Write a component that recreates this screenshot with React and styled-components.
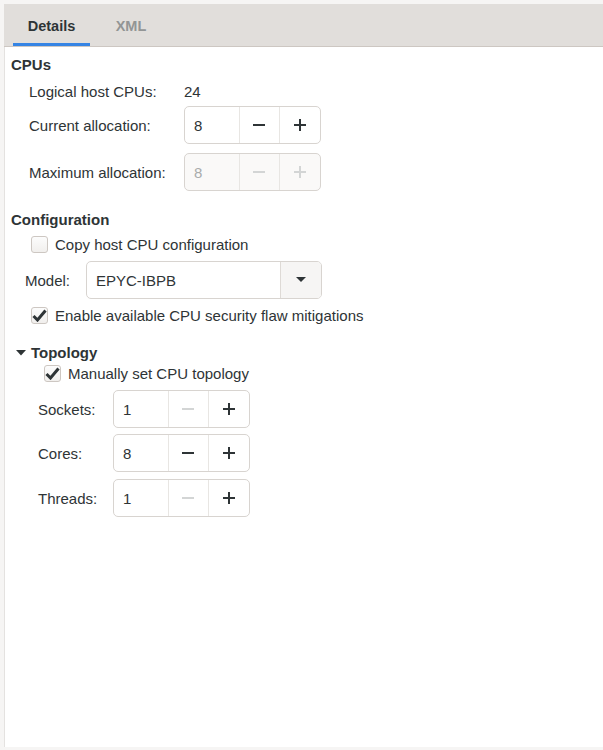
import React from "react"
import styled, { createGlobalStyle } from "styled-components"

const Global = createGlobalStyle`
  html, body {
    margin: 0;
    padding: 0;
    background: #f6f5f4;
  }
  body {
    font-family: "Liberation Sans", Arial, sans-serif;
    font-size: 15px;
    color: #2e3436;
  }
`

const Frame = styled.div`
  width: 603px;
  height: 750px;
  box-sizing: border-box;
  padding: 4px 0 3px 4px;
  display: flex;
  flex-direction: column;
`

const TabBar = styled.div`
  height: 42px;
  background: #e1dedb;
  border-bottom: 1px solid #cdc7c2;
  display: flex;
  align-items: stretch;
  padding-left: 9px;
`

const Tab = styled.div`
  width: ${(p) => (p.active ? "77px" : "82px")};
  display: flex;
  align-items: center;
  justify-content: center;
  font-weight: bold;
  font-size: 14.5px;
  color: ${(p) => (p.active ? "#2e3436" : "#929595")};
  box-shadow: ${(p) => (p.active ? "inset 0 -3px 0 #3584e4" : "none")};
  padding-top: 2px;
  box-sizing: border-box;
`

const Body = styled.div`
  flex: 1;
  background: #fff;
  border-left: 1px solid #e4e2e0;
  padding: 8px 0 0 6px;
`

const Heading = styled.div`
  font-weight: bold;
  font-size: 15px;
  height: 20px;
  line-height: 20px;
  margin-left: ${(p) => p.indent || 0}px;
  margin-top: ${(p) => p.gap || 0}px;
  display: flex;
  align-items: center;
  gap: 5px;
`

const Row = styled.div`
  display: flex;
  align-items: center;
  margin-left: ${(p) => p.indent || 0}px;
  margin-top: ${(p) => p.gap || 0}px;
  height: ${(p) => p.h || 38}px;
`

const Label = styled.div`
  width: ${(p) => p.w}px;
  color: #2e3436;
`

const Value = styled.div`
  color: #2e3436;
`

const Spin = styled.div`
  display: flex;
  width: 137px;
  height: 38px;
  box-sizing: border-box;
  border: 1px solid #d8d4d0;
  border-radius: 5px;
  background: ${(p) => (p.disabled ? "#faf9f8" : "#fff")};
  overflow: hidden;
`

const SpinInput = styled.div`
  width: 55px;
  display: flex;
  align-items: center;
  padding-left: 9px;
  box-sizing: border-box;
  color: ${(p) => (p.disabled ? "#a9acac" : "#2e3436")};
`

const SpinButton = styled.div`
  width: 41px;
  border-left: 1px solid #e8e6e3;
  display: flex;
  align-items: center;
  justify-content: center;
`

const Check = styled.div`
  width: 15px;
  height: 15px;
  border: 1px solid #cdc7c2;
  border-radius: 3px;
  background: linear-gradient(#fcfcfc, #f1efed);
  margin-right: 7px;
  display: flex;
  align-items: center;
  justify-content: center;
`

const Combo = styled.div`
  display: flex;
  width: 236px;
  height: 38px;
  box-sizing: border-box;
  border: 1px solid #d8d4d0;
  border-radius: 5px;
  overflow: hidden;
`

const ComboText = styled.div`
  flex: 1;
  display: flex;
  align-items: center;
  padding-left: 9px;
  font-size: 15px;
`

const ComboButton = styled.div`
  width: 40px;
  border-left: 1px solid #dedad6;
  background: #f6f5f4;
  display: flex;
  align-items: center;
  justify-content: center;
`

const Minus = ({ disabled }) => (
  <svg width="12" height="12" viewBox="0 0 12 12">
    <rect x="0" y="5" width="12" height="2" fill={disabled ? "#d3d5d5" : "#2e3436"} />
  </svg>
)

const Plus = ({ disabled }) => (
  <svg width="12" height="12" viewBox="0 0 12 12">
    <rect x="0" y="5" width="12" height="2" fill={disabled ? "#d3d5d5" : "#2e3436"} />
    <rect x="5" y="0" width="2" height="12" fill={disabled ? "#d3d5d5" : "#2e3436"} />
  </svg>
)

const Tick = () => (
  <svg width="15" height="13" viewBox="0 0 15 13">
    <path d="M1.5 7 L5.5 11 L13.5 1.5" fill="none" stroke="#2e3436" strokeWidth="3" />
  </svg>
)

const SpinBox = ({ value, disabled, minusOff }) => (
  <Spin disabled={disabled}>
    <SpinInput disabled={disabled}>{value}</SpinInput>
    <SpinButton>
      <Minus disabled={disabled || minusOff} />
    </SpinButton>
    <SpinButton>
      <Plus disabled={disabled} />
    </SpinButton>
  </Spin>
)

const CheckRow = ({ checked, label, indent, gap }) => (
  <Row indent={indent} gap={gap} h={16}>
    <Check>{checked && <Tick />}</Check>
    <span>{label}</span>
  </Row>
)

const App = () => {
  return (
    <Frame>
      <Global />
      <TabBar>
        <Tab active>Details</Tab>
        <Tab>XML</Tab>
      </TabBar>
      <Body>
        <Heading>CPUs</Heading>
        <Row indent={18} gap={7} h={18}>
          <Label w={155}>Logical host CPUs:</Label>
          <Value>24</Value>
        </Row>
        <Row indent={18} gap={6}>
          <Label w={155}>Current allocation:</Label>
          <SpinBox value="8" />
        </Row>
        <Row indent={18} gap={9}>
          <Label w={155}>Maximum allocation:</Label>
          <SpinBox value="8" disabled />
        </Row>
        <Heading gap={19}>Configuration</Heading>
        <CheckRow indent={20} gap={6} label="Copy host CPU configuration" />
        <Row indent={14} gap={9}>
          <Label w={61}>Model:</Label>
          <Combo>
            <ComboText>EPYC-IBPB</ComboText>
            <ComboButton>
              <svg width="10" height="6" viewBox="0 0 10 6">
                <path d="M0 0 H10 L5 5 Z" fill="#2e3436" />
              </svg>
            </ComboButton>
          </Combo>
        </Row>
        <CheckRow indent={20} gap={8} checked label="Enable available CPU security flaw mitigations" />
        <Heading indent={5} gap={20}>
          <svg width="10" height="6" viewBox="0 0 10 6">
            <path d="M0 0 H10 L5 5.5 Z" fill="#2e3436" />
          </svg>
          Topology
        </Heading>
        <CheckRow indent={33} gap={2} checked label="Manually set CPU topology" />
        <Row indent={27} gap={9}>
          <Label w={75}>Sockets:</Label>
          <SpinBox value="1" minusOff />
        </Row>
        <Row indent={27} gap={6}>
          <Label w={75}>Cores:</Label>
          <SpinBox value="8" />
        </Row>
        <Row indent={27} gap={7}>
          <Label w={75}>Threads:</Label>
          <SpinBox value="1" minusOff />
        </Row>
      </Body>
    </Frame>
  )
}

export default App
